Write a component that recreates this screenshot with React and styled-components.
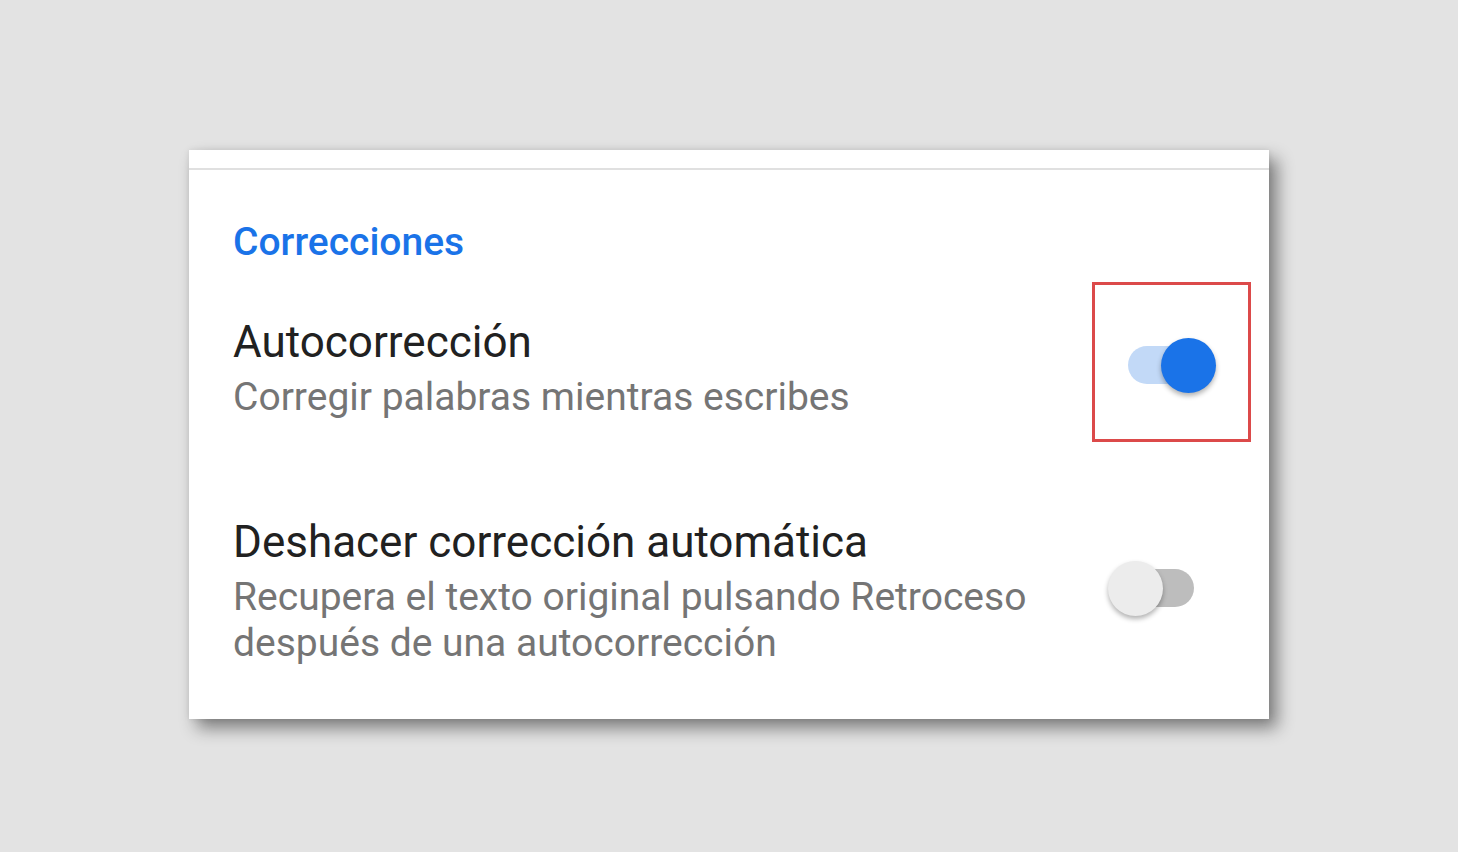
import React from 'react'
import styled, { createGlobalStyle } from 'styled-components'

const GlobalStyle = createGlobalStyle`
  html, body {
    margin: 0;
    padding: 0;
    background: #e3e3e3;
    font-family: Roboto, "Noto Sans", sans-serif;
  }
`

const Page = styled.div`
  width: 100%;
  min-height: 852px;
  padding-top: 150px;
  box-sizing: border-box;
`

const Card = styled.div`
  width: 1080px;
  margin: 0 auto;
  background: #ffffff;
  box-shadow: 0 0 6px rgba(0, 0, 0, 0.08), 8px 9px 16px rgba(0, 0, 0, 0.45);
  padding-bottom: 5px;
`

const TopStrip = styled.div`
  height: 18px;
  border-bottom: 2px solid #e0e0e0;
`

const Section = styled.div`
  padding: 0 53px 0 44px;
`

const SectionTitle = styled.div`
  margin-top: 49px;
  margin-bottom: 3px;
  font-size: 39px;
  line-height: 46px;
  font-weight: 500;
  color: #1a73e8;
`

const Row = styled.div`
  display: flex;
  align-items: center;
  justify-content: space-between;
  padding: 48px 0;
`

const TextBlock = styled.div`
  display: flex;
  flex-direction: column;
  max-width: 820px;
`

const Title = styled.div`
  font-size: 44px;
  line-height: 52px;
  color: #212121;
`

const Summary = styled.div`
  margin-top: 6px;
  font-size: 39px;
  line-height: 46px;
  color: #757575;
`

const Switch = styled.div`
  position: relative;
  width: 72px;
  height: 38px;
  margin-bottom: 6px;
  margin-right: ${p => (p.$on ? '16px' : '22px')};
  border-radius: 19px;
  background: ${p => (p.$on ? '#c2d9f7' : '#bdbdbd')};
  flex-shrink: 0;
`

const Thumb = styled.div`
  position: absolute;
  top: 50%;
  left: ${p => (p.$on ? '60px' : '13px')};
  width: 55px;
  height: 55px;
  margin: -27.5px 0 0 -27.5px;
  border-radius: 50%;
  background: ${p => (p.$on ? '#1a73e8' : '#ececec')};
  box-shadow: 0 3px 5px rgba(0, 0, 0, 0.3);
`

const Highlight = styled.div`
  position: absolute;
  left: -36px;
  top: -64px;
  width: 159px;
  height: 160px;
  box-sizing: border-box;
  border: 3px solid #dc4a4a;
  pointer-events: none;
`

const settings = [
  {
    title: 'Autocorrección',
    summary: ['Corregir palabras mientras escribes'],
    on: true,
    highlight: true,
  },
  {
    title: 'Deshacer corrección automática',
    summary: ['Recupera el texto original pulsando Retroceso', 'después de una autocorrección'],
    on: false,
  },
]

export default function App() {
  return (
    <Page>
      <GlobalStyle />
      <Card>
        <TopStrip />
        <Section>
          <SectionTitle>Correcciones</SectionTitle>
          {settings.map(s => (
            <Row key={s.title}>
              <TextBlock>
                <Title>{s.title}</Title>
                <Summary>
                  {s.summary.map((line, i) => (
                    <div key={i}>{line}</div>
                  ))}
                </Summary>
              </TextBlock>
              <Switch $on={s.on}>
                <Thumb $on={s.on} />
                {s.highlight && <Highlight />}
              </Switch>
            </Row>
          ))}
        </Section>
      </Card>
    </Page>
  )
}
